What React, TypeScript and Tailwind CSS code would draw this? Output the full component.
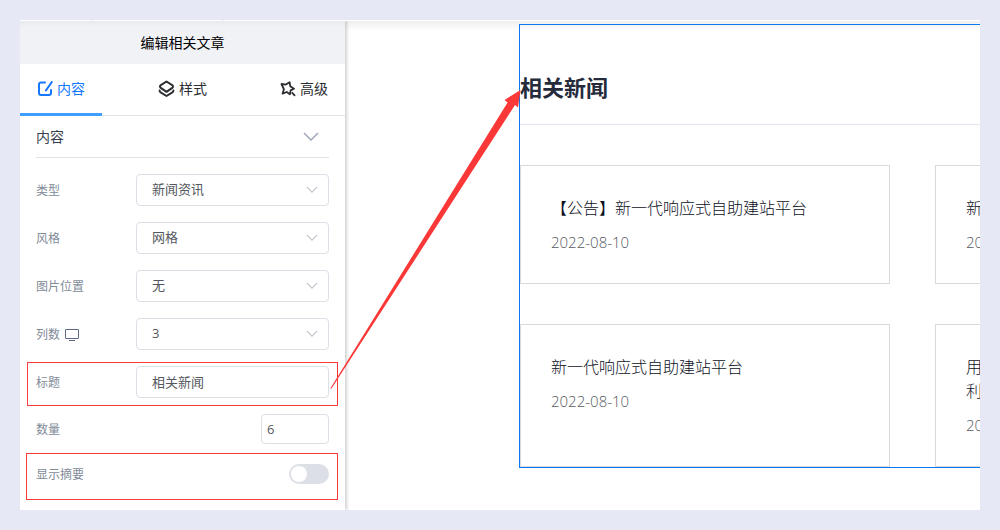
import React from 'react';

const SELECTS = [
  { id: 'type', label: '类型', value: '新闻资讯' },
  { id: 'style', label: '风格', value: '网格' },
  { id: 'position', label: '图片位置', value: '无' },
  { id: 'columns', label: '列数', value: '3', device: true },
];

const CARDS = [
  { title: '【公告】新一代响应式自助建站平台', date: '2022-08-10' },
  { title: '新', date: '20' },
  { title: '新一代响应式自助建站平台', date: '2022-08-10' },
  { title: '用\n利', date: '20' },
];

const EditIcon = () => (
  <svg width="16" height="16" viewBox="0 0 16 16" fill="none" stroke="currentColor" strokeWidth="2" strokeLinecap="round">
    <path d="M8 1.500H4Q2 1.500 2 3.500V12Q2 14 4 14H12Q14 14 14 12V9" />
    <path d="M14.8 1 9 9.400" />
  </svg>
);

const LayersIcon = () => (
  <svg width="17" height="18" viewBox="0 0 17 18" fill="none" stroke="currentColor" strokeWidth="2" strokeLinejoin="round" strokeLinecap="round">
    <path d="M8.500 1.500 14.600 5.300Q15.600 6.500 14.600 7.700L8.500 11.800 2.400 7.700Q1.400 6.500 2.400 5.300Z" />
    <path d="M1.600 10.500Q1.600 11.800 2.600 12.400L8.500 16 14.400 12.400Q15.400 11.800 15.400 10.500" />
  </svg>
);

const StarIcon = () => (
  <svg width="16" height="16" viewBox="0 0 16 16" fill="none" stroke="currentColor" strokeWidth="1.8" strokeLinejoin="round" strokeLinecap="round">
    <path d="M1.500 3 5.800 3.600 9.600 1.200 10.200 5.200 14 7.800 10.600 9.400 9.900 13.400 6.800 11 2.600 12.600 3.900 8.200Z" />
    <path d="M12.200 11.800 14.600 14.400" />
  </svg>
);

const MonitorIcon = () => (
  <svg width="14" height="14" viewBox="0 0 14 14" fill="none" stroke="#5c6885">
    <rect x="0.500" y="1.500" width="13" height="9" rx="0.500" />
    <path d="M4 12.500H10" />
  </svg>
);

const Chevron = ({ className }: { className: string }) => (
  <svg viewBox="0 0 16 9" fill="none" stroke="currentColor" className={className}>
    <path d="M1 1 8 8 15 1" strokeWidth="1.500" />
  </svg>
);

const TABS = [
  { label: '内容', icon: <EditIcon />, active: true },
  { label: '样式', icon: <LayersIcon />, active: false },
  { label: '高级', icon: <StarIcon />, active: false },
];

const EditorPanel: React.FC = () => (
  <aside className="relative w-[325px] shrink-0 bg-white pb-[26px] shadow-[2px_0_3px_rgba(0,0,0,0.18)]">
    <h1 className="bg-linear-to-b from-[#e8eaed] to-[#f0f2f6] to-15% py-[11px] text-center text-sm leading-[21px] text-black">
      编辑相关文章
    </h1>

    <nav className="flex justify-between border-b border-[#e0e3e8]">
      {TABS.map((tab) => (
        <button
          key={tab.label}
          className={`-mb-px flex h-[52px] w-[82px] items-center justify-center gap-1 border-b-3 text-sm ${
            tab.active ? 'border-[#409eff] text-[#1677ff]' : 'border-transparent text-[#2b2d30]'
          }`}
        >
          {tab.icon}
          {tab.label}
        </button>
      ))}
    </nav>

    <div className="px-4">
      <button className="flex h-[42px] w-full items-center justify-between border-b border-[#e0e3e8] pr-[10px] text-sm text-[#36404f]">
        内容
        <Chevron className="h-[9px] w-4 text-[#a0a8b6]" />
      </button>

      <div className="mt-4 flex flex-col gap-4 text-xs text-[#828b99]">
        {SELECTS.map((field) => (
          <div key={field.id} className="flex h-8 items-center">
            <label htmlFor={field.id} className="flex w-[100px] items-center gap-[5px] pt-[2px]">
              {field.label}
              {field.device && <MonitorIcon />}
            </label>
            <div className="relative flex-1">
              <select
                id={field.id}
                className="h-8 w-full appearance-none rounded-[4px] border border-[#dcdfe6] bg-white pl-[15px] text-[13px] text-[#55585e]"
              >
                <option>{field.value}</option>
              </select>
              <Chevron className="pointer-events-none absolute top-3 right-[11px] h-[7px] w-3 text-[#c0c4cc]" />
            </div>
          </div>
        ))}

        <div className="relative flex h-8 items-center">
          <label htmlFor="title" className="w-[100px] pt-[2px]">标题</label>
          <input
            id="title"
            defaultValue="相关新闻"
            className="h-8 w-0 flex-1 rounded-[4px] border border-[#dcdfe6] pb-[2px] pl-[15px] text-[13px] text-[#55585e]"
          />
          <span className="pointer-events-none absolute -inset-x-[9px] -top-1 -bottom-2 border border-[#f93a3a]" />
        </div>

        <div className="flex h-[30px] items-center justify-between">
          <label htmlFor="count" className="pt-[2px]">数量</label>
          <input
            id="count"
            defaultValue="6"
            className="h-[30px] w-[68px] rounded-[4px] border border-[#dcdfe6] pl-[5px] text-[13px] text-[#55585e]"
          />
        </div>

        <div className="relative mt-1 flex h-5 items-center justify-between">
          <label htmlFor="summary" className="pt-[2px]">显示摘要</label>
          <input
            id="summary"
            type="checkbox"
            role="switch"
            className="h-5 w-10 appearance-none rounded-full bg-[#dcdfe6] p-[2px] before:block before:size-4 before:rounded-full before:bg-white checked:bg-[#409eff] checked:before:ml-5"
          />
          <span className="pointer-events-none absolute -top-[11px] -right-[9px] -bottom-4 -left-[10px] border border-[#f93a3a]" />
        </div>
      </div>
    </div>
  </aside>
);

const Preview: React.FC = () => (
  <main className="min-w-0 flex-1 overflow-hidden bg-linear-to-b from-[#efefef] to-white to-2% pt-[3px] pl-[174px]">
    <section className="w-[1202px] border border-[#0a78ee]">
      <h2 className="border-b border-[#e2e6ee] pt-[46px] pb-[21px] text-[22px] leading-8 font-bold text-[#252b3a]">
        相关新闻
      </h2>
      <div className="mt-10 grid grid-cols-[370px_370px] gap-x-[45px] gap-y-10">
        {CARDS.map((card, i) => (
          <article key={i} className="border border-[#d9dadc] p-[30px]">
            <h3 className="text-base leading-6 font-light whitespace-pre-line text-[#0c101c]">{card.title}</h3>
            <p className="mt-[11px] text-[15px] leading-[22px] font-light text-[#565a62]">{card.date}</p>
          </article>
        ))}
      </div>
    </section>
  </main>
);

export default function App() {
  return (
    <div className="relative flex min-h-screen flex-col bg-[#e6e9f5] p-5 font-['Open_Sans','Noto_Sans_CJK_SC',sans-serif]">
      <div className="flex h-px bg-white">
        <span className="w-[73px] border-r border-[#d5d9e4]" />
        <span className="w-[130px] border-r border-[#d5d9e4]" />
      </div>
      <div className="flex flex-1 overflow-hidden bg-white">
        <EditorPanel />
        <Preview />
      </div>
      {/* pointer from the title field to the rendered heading */}
      <svg width="192" height="300" viewBox="330 90 192 300" className="pointer-events-none absolute top-[90px] left-[330px]" fill="#fb3838">
        <path d="M330.300 388.500 507.600 102.500 504.500 100 520.500 90 518 107.500 515 105 331.500 388.500Z" />
      </svg>
    </div>
  );
}
